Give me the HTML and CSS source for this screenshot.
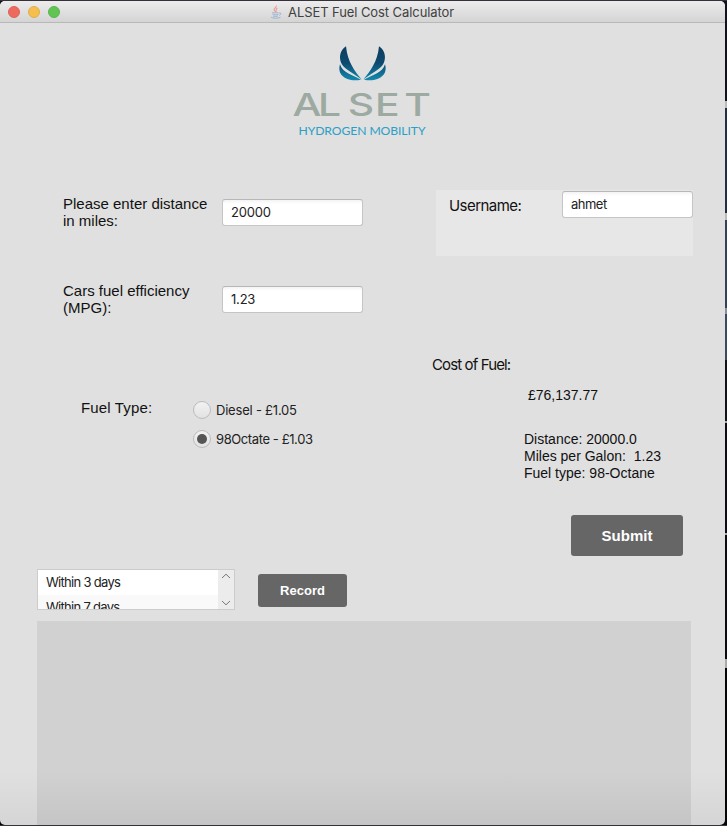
FILE: index.html
```html
<!DOCTYPE html>
<html lang="en">
<head>
<meta charset="utf-8">
<title>ALSET Fuel Cost Calculator</title>
<link rel="stylesheet" href="styles.css">
</head>
<body>
<div class="window">
  <header class="titlebar">
    <div class="lights"><i class="light red"></i><i class="light yellow"></i><i class="light green"></i></div>
    <div class="title">
      <svg class="java" width="12" height="14" viewBox="0 0 12 14" fill="none">
        <path d="M6.3 .5C7 2.5 3.5 3 4.2 5.2L5.6 7M7.4 3C5.2 4 6.8 5.5 5.8 6.8" stroke="#ed9d94" stroke-width="1.1"/>
        <path d="M2 7.8h6.5M2.5 9.3c1.5.7 4 .7 5.8 0M3 11c1.6.6 3.5.6 5 0M1 12.2c2.5 1.4 7.2 1.3 9.5 0M9 8c2.8-.8 2 2 .2 2.4" stroke="#8eaad2" stroke-width=".8"/>
      </svg>
      <span class="title-text">ALSET Fuel Cost Calculator</span>
    </div>
  </header>

  <div class="brand">
    <svg width="140" height="98" viewBox="293 45 140 98">
      <defs>
        <linearGradient id="wing" gradientUnits="userSpaceOnUse" x1="0" y1="46" x2="0" y2="80">
          <stop offset="0" stop-color="#0d3c5c"/><stop offset=".5" stop-color="#0d4a70"/><stop offset="1" stop-color="#1389ad"/>
        </linearGradient>
      </defs>
      <g id="half" fill="url(#wing)">
        <path d="M346 46.2C339.5 50.5 338.5 58.5 342 64.5C345.5 70 354 73.5 361.8 79.6C355 71.5 347.5 62 346 46.2Z"/>
        <path d="M340 64.3C336.8 74.5 345.5 82.5 361 79.8C353 74.5 342.5 73.5 340 64.3Z"/>
      </g>
      <use href="#half" transform="matrix(-1 0 0 1 725 0)"/>
      <text class="wordmark" transform="translate(292.5 115.6) scale(1.32 1)" x="0 19.4 41.8 62.6 84.6" y="0">ALSET</text>
      <text class="tagline" x="298.5" y="135" textLength="127">HYDROGEN MOBILITY</text>
    </svg>
  </div>

  <main class="columns">
    <section class="form">
      <div class="field">
        <label class="caption" for="distance">Please enter distance<br>in miles:</label>
        <input id="distance" class="input" value="20000">
      </div>
      <div class="field">
        <label class="caption" for="mpg">Cars fuel efficiency<br>(MPG):</label>
        <input id="mpg" class="input" value="1.23">
      </div>
      <div class="fuel">
        <div class="caption type">Fuel Type:</div>
        <div class="options">
          <div class="option"><i class="radio"></i><span class="diesel">Diesel - £1.05</span></div>
          <div class="option"><i class="radio on"></i><span class="octate">98Octate - £1.03</span></div>
        </div>
      </div>
    </section>
    <section class="side">
      <div class="user">
        <label for="user">Username:</label>
        <input id="user" class="input" value="ahmet">
      </div>
      <div class="cost-label">Cost of Fuel:</div>
      <div class="cost">£76,137.77</div>
      <div class="summary">Distance: 20000.0<br>Miles per Galon:&nbsp; 1.23<br>Fuel type: 98-Octane</div>
      <button class="button submit">Submit</button>
    </section>
  </main>

  <div class="records">
    <div class="list">
      <div class="items"><div>Within 3 days</div><div>Within 7 days</div></div>
      <div class="scroll">
        <svg width="10" height="6" viewBox="0 0 10 6"><path d="M1 5L5 1.2L9 5"/></svg>
        <svg width="10" height="6" viewBox="0 0 10 6"><path d="M1 1L5 4.8L9 1"/></svg>
      </div>
    </div>
    <button class="button record">Record</button>
  </div>
  <div class="output"></div>
</div>
</body>
</html>
```
FILE: styles.css
```css
* { box-sizing: border-box; }
body {
  margin: 0;
  padding-top: 1px;
  height: 826px;
  overflow: hidden;
  font-family: "Liberation Sans", sans-serif;
  color: #111;
  background: linear-gradient(#35303a 0 1px, #10131f 1px 101px, #bbb 101px 108px, #222e41 108px 213px, #bbb 213px 220px, #344257 220px 308px, #8a9099 308px 314px, #3c4a60 314px 360px, #10121c 360px 421px, #aaa 421px 423px, #0c0c18 423px 533px, #aaa 533px 535px, #0a0a13 535px 659px, #aaa 659px 668px, #050507 668px 825px, #32323a 825px);
}
.window {
  display: flex;
  flex-direction: column;
  width: 725px;
  height: 824px;
  border-radius: 5px;
  overflow: hidden;
  background: linear-gradient(#e0e0e0 0 770px, #d5d5d5);
}
.titlebar {
  display: grid;
  grid-template-columns: 270px 1fr;
  align-items: center;
  height: 22px;
  flex: none;
  background: linear-gradient(#ececec, #d4d4d4);
  border-bottom: 1px solid #b8b8b8;
}
.lights { display: flex; gap: 8px; padding-left: 8px; }
.light { width: 12px; height: 12px; border-radius: 50%; }
.red { background: #ee6a5f; border: 1px solid #d9655b; }
.yellow { background: #f5bf4f; border: 1px solid #dfae4d; }
.green { background: #61c554; border: 1px solid #5bb451; }
.title { display: flex; align-items: center; gap: 6px; font: 13px/20px Inter, sans-serif; color: #404040; }
.title-text { letter-spacing: -0.08px; }
.brand { height: 167px; padding: 22px 0 0 293px; flex: none; }
.brand svg { display: block; overflow: visible; }
.wordmark { font: 500 31px Inter, sans-serif; fill: #9daaa1; }
.tagline { font: 12.2px Lato, sans-serif; fill: #2b9fc6; }
.columns { display: grid; grid-template-columns: 432px 1fr; height: 379px; flex: none; }
.form { padding: 5px 0 0 63px; }
.field { display: grid; grid-template-columns: 159px 141px; height: 87px; align-items: start; }
.caption { font-size: 15px; line-height: 17px; white-space: nowrap; }
.type { letter-spacing: 0.15px; }
.input {
  width: 141px;
  height: 27px;
  padding: 0 8px 2px;
  border: 1px solid #c5c5c5;
  border-top-color: #b7b7b7;
  border-radius: 3px;
  background: linear-gradient(#f3f3f3, #fff 4px);
  font: 13px Inter, sans-serif;
  letter-spacing: -0.2px;
  color: #222;
}
.field .input { margin-top: 4px; }
.fuel { display: grid; grid-template-columns: 112px 1fr; padding: 30px 0 0 18px; }
.options { display: grid; gap: 10px; padding-top: 1px; }
.option { display: flex; align-items: center; gap: 5px; height: 19px; font: 13px Inter, sans-serif; color: #222; }
.diesel { letter-spacing: -0.21px; }
.octate { letter-spacing: -0.4px; }
.radio {
  display: grid;
  place-items: center;
  width: 18px;
  height: 18px;
  border: 1px solid #bcbcbc;
  border-radius: 50%;
  background: linear-gradient(#f2f2f2, #e2e2e2);
}
.on::after { content: ""; width: 10px; height: 10px; border-radius: 50%; background: #555; }
.side { display: flex; flex-direction: column; align-items: flex-start; }
.user { display: flex; justify-content: space-between; width: 257px; height: 66px; margin-left: 4px; padding: 1px 0 0 13px; background: #e7e7e7; }
.user label { font: 15px/30px Inter, sans-serif; letter-spacing: -0.55px; }
.user .input { width: 131px; letter-spacing: -0.5px; }
.cost-label { margin-top: 99px; font: 15px/19px Inter, sans-serif; letter-spacing: -0.88px; }
.cost { margin: 13px 0 0 96px; font-size: 14px; line-height: 17px; }
.summary { margin: 27px 0 0 92px; font-size: 14px; line-height: 17px; }
.button { border: 0; border-radius: 3px; background: #666; color: #fff; font: bold 15px "Liberation Sans", sans-serif; }
.submit { width: 112px; height: 41px; margin: 33px 0 0 139px; }
.records { display: flex; gap: 23px; height: 52px; padding-left: 37px; flex: none; }
.list { display: flex; width: 198px; height: 41px; border: 1px solid #ccc; overflow: hidden; background: #fff; }
.items { flex: 1; font: 13px/25px Inter, sans-serif; color: #222; letter-spacing: -0.7px; }
.items div { height: 25px; padding-left: 8px; }
.items div:nth-child(2) { background: #f9f9f9; }
.scroll { display: flex; flex-direction: column; align-items: center; justify-content: space-between; width: 16px; padding: 3px 0; background: #ececec; }
.scroll path { fill: none; stroke: #777; }
.record { width: 89px; height: 33px; margin-top: 5px; font-size: 13px; }
.output { width: 654px; flex: 1; margin-left: 37px; background: linear-gradient(#d1d1d1 0 150px, #c5c5c5); }
```
